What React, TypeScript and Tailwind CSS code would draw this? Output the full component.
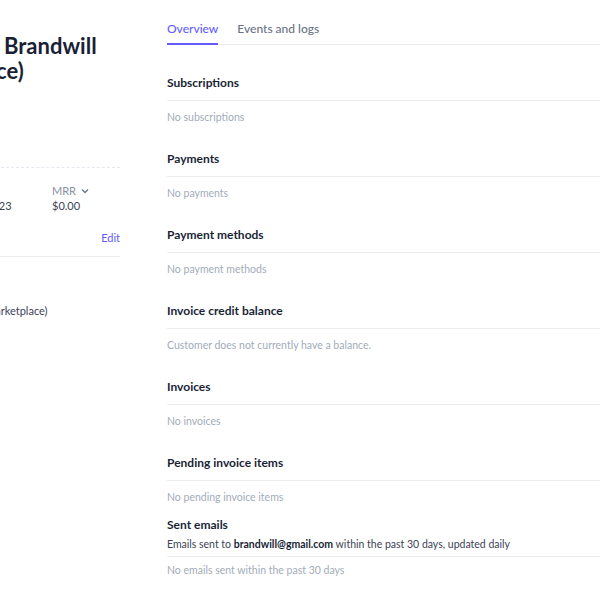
const sections = [
  { title: 'Subscriptions', empty: 'No subscriptions' },
  { title: 'Payments', empty: 'No payments' },
  { title: 'Payment methods', empty: 'No payment methods' },
  { title: 'Invoice credit balance', empty: 'Customer does not currently have a balance.' },
  { title: 'Invoices', empty: 'No invoices' },
  { title: 'Pending invoice items', empty: 'No pending invoice items' },
]

export default function App() {
  return (
    <div
      className="w-[600px] h-[600px] overflow-hidden bg-white flex"
      style={{ fontFamily: 'Lato, "Noto Sans", sans-serif' }}
    >
      {/* left panel, partly scrolled out of view */}
      <div className="w-[120px] shrink-0">
        <div className="w-[240px] -ml-[120px]">
          <h1 className="pt-[33px] pl-[10px] text-[22px] leading-[25px] font-bold text-[#1a1f36] whitespace-nowrap">
            Customer - Brandwill
            <br />
            (Marketplace)
          </h1>

          <div className="mt-[84px] border-t border-dashed border-[#e3e8ee] pt-[15px] flex gap-[16px] text-[11px]">
            <div className="w-[56px]">
              <div className="leading-[15px] text-[#8792a2]">Spent</div>
              <div className="leading-[15px] text-[#3c4257]">$0.00</div>
            </div>
            <div className="w-[84px]">
              <div className="leading-[15px] text-[#8792a2]">Since</div>
              <div className="leading-[15px] text-[#3c4257] whitespace-nowrap">Jul 28, 2023</div>
            </div>
            <div>
              <div className="leading-[15px] text-[#8792a2] flex items-center gap-1">
                MRR
                <svg width="10" height="10" viewBox="0 0 10 10" fill="none" stroke="#697386" strokeWidth="1.3">
                  <path d="M2 3.5 L5 6.5 L8 3.5" />
                </svg>
              </div>
              <div className="leading-[15px] text-[#3c4257]">$0.00</div>
            </div>
          </div>

          <div className="mt-[15px] flex justify-between items-center border-b border-[#ebeef1] pb-[8px]">
            <span className="text-[13px] font-semibold text-[#1a1f36] leading-5">Details</span>
            <span className="text-[11px] text-[#635bff] leading-5">Edit</span>
          </div>

          <div className="pt-[26px] text-[11px] leading-4">
            <div className="font-semibold text-[#3c4257]">Name</div>
            <div className="mt-[4px] pl-[26px] text-[#3c4257]">Brandwill Store (Marketplace)</div>
          </div>
        </div>
      </div>

      {/* main content */}
      <div className="ml-[47px] flex-1 min-w-0">
        <div className="pt-[19px] flex gap-[19px] border-b border-[#ebeef1] text-[12px] font-medium">
          <div className="leading-5 pb-[4px] border-b-2 border-[#635bff] text-[#635bff] -mb-px">Overview</div>
          <div className="leading-5 pb-[4px] text-[#697386]">Events and logs</div>
        </div>

        <div className="pt-[28px]">
          {sections.map((s) => (
            <div key={s.title} className="mb-[24px]">
              <div className="text-[12px] leading-5 font-bold text-[#1a1f36] pb-[7px] border-b border-[#ebeef1]">
                {s.title}
              </div>
              <div className="pt-[8px] text-[10.5px] leading-4 text-[#a3acb9]">{s.empty}</div>
            </div>
          ))}

          <div className="-mt-[14px]">
            <div className="text-[12px] leading-5 font-bold text-[#1a1f36]">Sent emails</div>
            <div className="mt-px text-[10.5px] leading-4 text-[#3c4257] pb-[4px] border-b border-[#ebeef1]">
              Emails sent to <span className="font-bold text-[#1a1f36]">brandwill@gmail.com</span> within the past 30
              days, updated daily
            </div>
            <div className="pt-[5px] text-[10.5px] leading-4 text-[#a3acb9]">No emails sent within the past 30 days</div>
          </div>
        </div>
      </div>
    </div>
  )
}
